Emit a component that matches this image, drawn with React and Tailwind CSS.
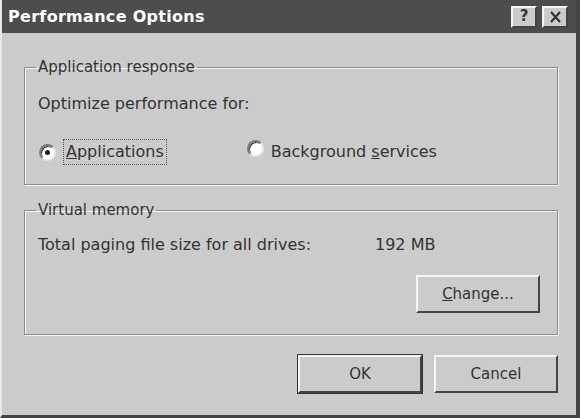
import React from 'react'

const font = { fontFamily: '"DejaVu Sans", "Liberation Sans", sans-serif' }

const Radio = ({ checked }) => (
  <span className="relative inline-block w-[17px] h-[17px] rounded-full bg-white border-2 border-t-[#7a7a7a] border-l-[#7a7a7a] border-b-[#e8e8e8] border-r-[#e8e8e8] shadow-[inset_1px_1px_0_#333]">
    {checked && <span className="absolute left-[4px] top-[4px] w-[5px] h-[5px] rounded-full bg-[#222]" />}
  </span>
)

const Group = ({ title, className, children }) => (
  <fieldset className={'border border-[#8c8c8c] shadow-[1px_1px_0_#f4f4f4,inset_1px_1px_0_#f4f4f4] px-[13px] ' + className}>
    <legend className="-ml-[2px] px-[2px] text-[15px] leading-[17px] text-[#333]">{title}</legend>
    {children}
  </fieldset>
)

const Button = ({ children, isDefault, className }) => (
  <button
    className={
      'h-[38px] w-[124px] bg-[#cbcbcb] text-[15px] text-[#333] border-2 border-t-[#f4f4f4] border-l-[#f4f4f4] border-b-[#444] border-r-[#444] ' +
      (isDefault ? 'outline outline-1 outline-[#333] ' : '') +
      (className || '')
    }
  >
    {children}
  </button>
)

export default function App() {
  return (
    <div style={font} className="w-[580px] h-[418px] bg-[#cbcbcb] flex flex-col border-r-4 border-b-[3px] border-[#444] border-l-2 border-l-[#e8e8e8] overflow-hidden">
      <div className="h-[33px] bg-[#4d4d4d] flex items-center pl-[6px] pr-[8px]">
        <span className="text-white font-bold text-[16px] tracking-[0.3px]">Performance Options</span>
        <div className="ml-auto flex gap-[5px]">
          <span className="w-[26px] h-[22px] bg-[#cbcbcb] border-2 border-t-[#f4f4f4] border-l-[#f4f4f4] border-b-[#444] border-r-[#444] flex items-center justify-center text-[15px] font-bold text-[#333] leading-none">?</span>
          <span className="w-[26px] h-[22px] bg-[#cbcbcb] border-2 border-t-[#f4f4f4] border-l-[#f4f4f4] border-b-[#444] border-r-[#444] flex items-center justify-center">
            <svg width="13" height="12" viewBox="0 0 13 12"><path d="M2 1L11 11M11 1L2 11" stroke="#333" strokeWidth="2.2" /></svg>
          </span>
        </div>
      </div>

      <div className="flex flex-col pl-[22px] pr-[18px] pt-[26px]">
        <Group title="Application response" className="h-[126px]">
          <div className="text-[16px] text-[#333] mt-[16px]">Optimize performance for:</div>
          <div className="flex items-center mt-[24px] ml-[1px]">
            <Radio checked />
            <span className="ml-[8px] px-[2px] text-[16px] text-[#333] outline outline-1 outline-dotted outline-[#555]">
              <span className="underline">A</span>pplications
            </span>
            <span className="ml-[81px]"><Radio /></span>
            <span className="ml-[7px] text-[16px] text-[#333]">Background <span className="underline">s</span>ervices</span>
          </div>
        </Group>

        <Group title="Virtual memory" className="h-[133px] mt-[17px]">
          <div className="flex text-[16px] text-[#333] mt-[14px]">
            <span className="w-[337px]">Total paging file size for all drives:</span>
            <span>192 MB</span>
          </div>
          <div className="flex justify-end mt-[18px] pr-[4px]">
            <Button><span className="underline">C</span>hange...</Button>
          </div>
        </Group>

        <div className="flex justify-end gap-[12px] mt-[20px] pr-[0px]">
          <Button isDefault>OK</Button>
          <Button>Cancel</Button>
        </div>
      </div>
    </div>
  )
}
